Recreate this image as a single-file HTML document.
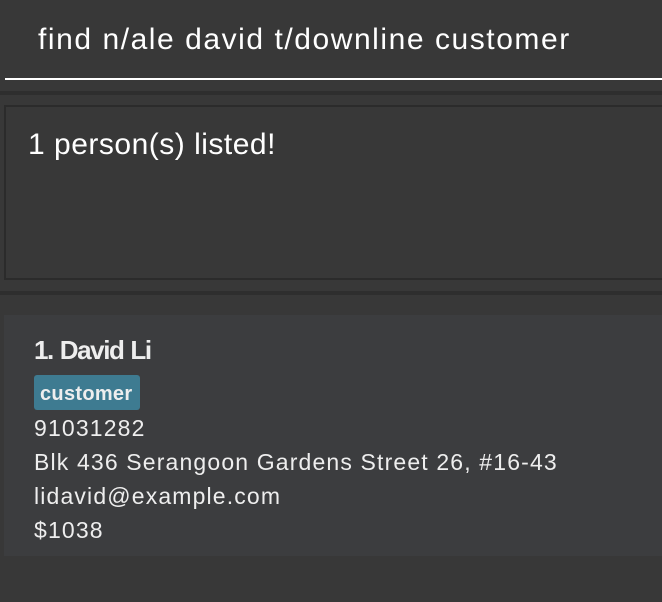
<!DOCTYPE html>
<html><head><style>
body{margin:0;width:662px;height:602px;background:#383838;overflow:hidden;font-family:"Liberation Sans",sans-serif;color:#fff;position:relative}
div{position:absolute;box-sizing:border-box}
.t{white-space:nowrap}
</style></head><body>
<div class="t" style="left:38px;top:20px;font-size:30px;font-weight:300;letter-spacing:1.55px;line-height:40px;">find n/ale david t/downline customer</div>
<div style="left:5px;top:78px;width:657px;height:2px;background:#fff"></div>
<div style="left:0;top:91px;width:662px;height:4px;background:#2e2e2e"></div>
<div style="left:4px;top:105px;width:660px;height:175px;border:2px solid #2b2b2b;"></div>
<div class="t" style="left:28px;top:125px;font-size:30px;letter-spacing:0.5px;line-height:40px;">1 person(s) listed!</div>
<div style="left:0;top:291px;width:662px;height:4px;background:#2e2e2e"></div>
<div style="left:4px;top:315px;width:658px;height:241px;background:#3c3d3f"></div>
<div class="t" style="left:34px;top:333px;font-size:26px;font-weight:bold;color:#eee;line-height:34px;letter-spacing:-1.4px;word-spacing:1px">1. David Li</div>
<div style="left:34px;top:375px;width:106px;height:35px;background:#3e7b91;border-radius:3px"></div>
<div class="t" style="left:40px;top:381px;font-size:20px;font-weight:bold;color:#eee;line-height:26px;letter-spacing:0.3px">customer</div>
<div class="t" style="left:34px;top:411px;font-size:23px;color:#eee;line-height:34px;letter-spacing:1.15px">91031282<br>Blk 436 Serangoon Gardens Street 26, #16-43<br>lidavid@example.com<br>$1038</div>
</body></html>
